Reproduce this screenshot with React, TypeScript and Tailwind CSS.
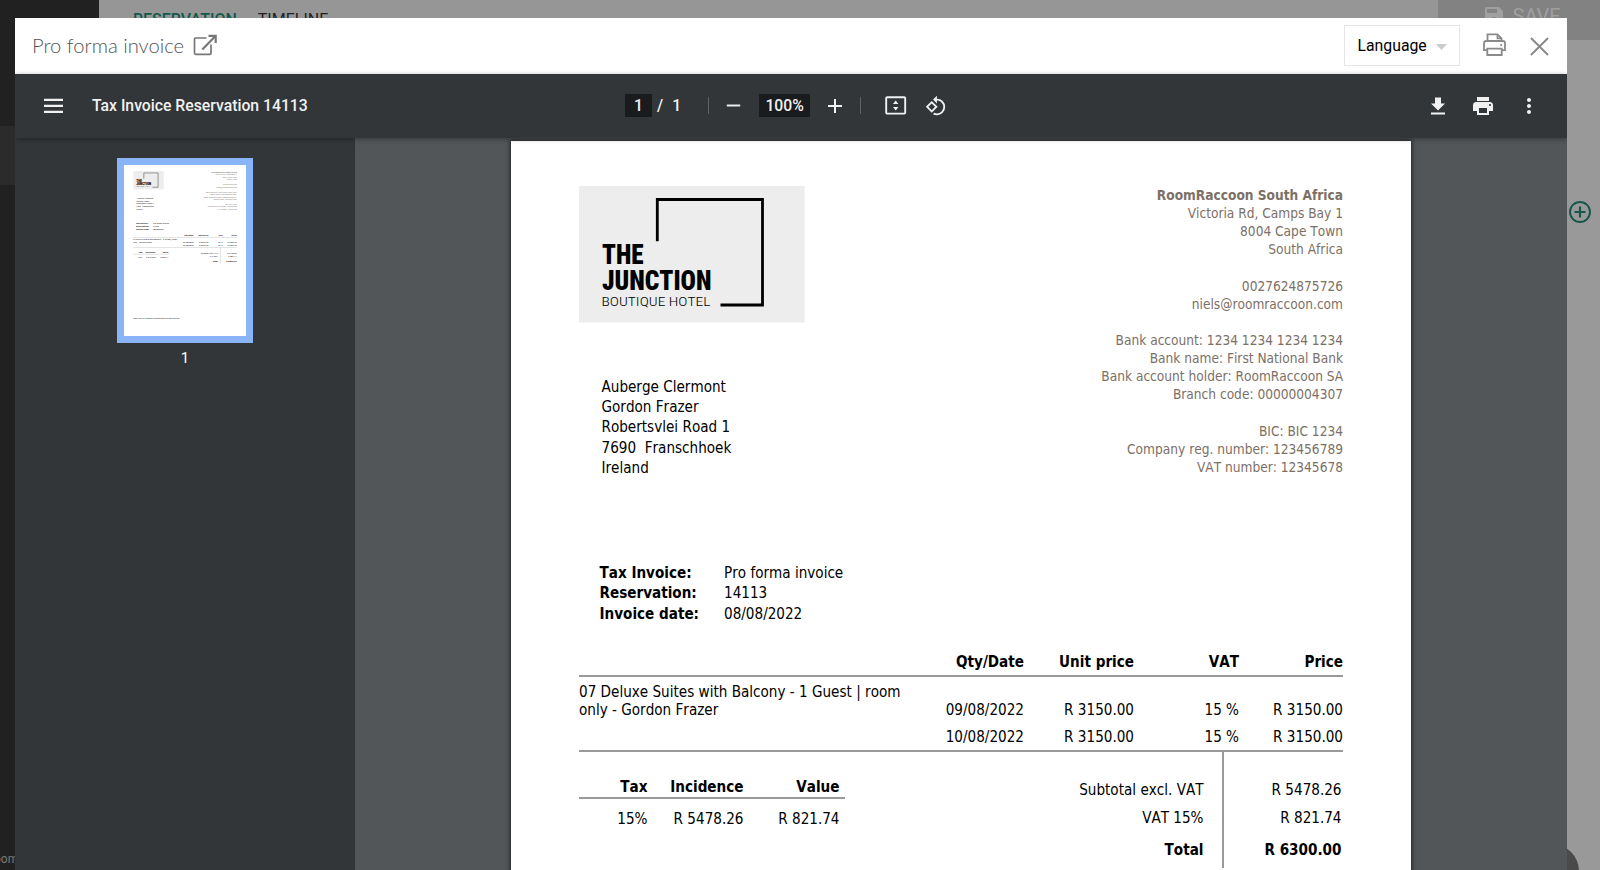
import type { ReactNode } from "react";
import {
  MdAdd,
  MdMenu,
  MdMoreVert,
  MdPrint,
  MdRemove,
  MdRotate90DegreesCcw,
  MdSave,
} from "react-icons/md";

const hotelLines = [
  "Victoria Rd, Camps Bay 1",
  "8004 Cape Town",
  "South Africa",
  "",
  "0027624875726",
  "niels@roomraccoon.com",
  "",
  "Bank account: 1234 1234 1234 1234",
  "Bank name: First National Bank",
  "Bank account holder: RoomRaccoon SA",
  "Branch code: 00000004307",
  "",
  "BIC: BIC 1234",
  "Company reg. number: 123456789",
  "VAT number: 12345678",
];

const guestLines = [
  "Auberge Clermont",
  "Gordon Frazer",
  "Robertsvlei Road 1",
  "7690\u00a0 Franschhoek",
  "Ireland",
];

const meta = [
  ["Tax Invoice:", "Pro forma invoice"],
  ["Reservation:", "14113"],
  ["Invoice date:", "08/08/2022"],
];

function HotelLogo() {
  return (
    <svg width="226" height="137" viewBox="0 0 226 137" className="block">
      <rect width="225.7" height="136.5" fill="#ededed" />
      <path
        d="M78.3 55.3V13.5H183.5V119H141.5"
        fill="none"
        stroke="#000"
        strokeWidth="2.8"
      />
      <g fill="#000" fontFamily="Roboto, sans-serif">
        <text x="23" y="78.3" fontSize="27" fontWeight="900" textLength="41.5" lengthAdjust="spacingAndGlyphs">
          THE
        </text>
        <text x="23" y="104.3" fontSize="27" fontWeight="900" textLength="109.5" lengthAdjust="spacingAndGlyphs">
          JUNCTION
        </text>
        <text x="22.5" y="120.3" fontSize="13.4" fontWeight="300" textLength="109" lengthAdjust="spacingAndGlyphs">
          BOUTIQUE HOTEL
        </text>
      </g>
    </svg>
  );
}

function InvoicePage() {
  return (
    <div className="flex h-[1273px] w-[900px] flex-col bg-white pl-[68px] pr-[68px] pt-[45px] font-['DejaVu_Sans_Condensed','DejaVu_Sans',sans-serif] text-[15.1px] text-black [font-kerning:none] [font-stretch:condensed]">
      <div className="flex h-[376.5px] shrink-0 justify-between">
        <div>
          <HotelLogo />
          <div className="ml-[22.5px] mt-[54px] leading-[20.2px]">
            {guestLines.map((line) => (
              <div key={line}>{line}</div>
            ))}
          </div>
        </div>
        <div className="pt-[0.1px] text-right text-[13.6px] leading-[18.13px] text-[#7c7066]">
          <div className="font-bold">RoomRaccoon South Africa</div>
          {hotelLines.map((line, i) => (
            <div key={i} className="h-[18.13px]">
              {line}
            </div>
          ))}
        </div>
      </div>

      <div className="ml-[20.5px] h-[89.5px] shrink-0 leading-[20.5px]">
        {meta.map(([label, value]) => (
          <div key={label} className="grid grid-cols-[124.5px_1fr]">
            <span className="font-bold">{label}</span>
            <span>{value}</span>
          </div>
        ))}
      </div>

      <div className="grid shrink-0 grid-cols-[345px_100px_110px_105px_104px] border-b-[2.5px] border-[#999] pb-[3px] text-right font-bold leading-[20px]">
        <span />
        <span>Qty/Date</span>
        <span>Unit price</span>
        <span>VAT</span>
        <span>Price</span>
      </div>
      <div className="h-[75px] shrink-0 border-b-[2.5px] border-[#999] pt-[5.5px] leading-[18.2px]">
        <div className="grid grid-cols-[345px_100px_110px_105px_104px] items-end text-right">
          <span className="text-left">
            07 Deluxe Suites with Balcony - 1 Guest | room
            <br />
            only - Gordon Frazer
          </span>
          <span>09/08/2022</span>
          <span>R 3150.00</span>
          <span>15 %</span>
          <span>R 3150.00</span>
        </div>
        <div className="mt-[9px] grid grid-cols-[345px_100px_110px_105px_104px] text-right">
          <span />
          <span>10/08/2022</span>
          <span>R 3150.00</span>
          <span>15 %</span>
          <span>R 3150.00</span>
        </div>
      </div>

      <div className="flex h-[510px] shrink-0 items-start justify-between">
        <div className="w-[266px] pt-[25px] text-right leading-[20px]">
          <div className="grid grid-cols-[68.5px_96px_96px] border-b-[2px] border-[#999] font-bold">
            <span>Tax</span>
            <span>Incidence</span>
            <span>Value</span>
          </div>
          <div className="mt-[9.5px] grid grid-cols-[68.5px_96px_96px]">
            <span>15%</span>
            <span>R 5478.26</span>
            <span>R 821.74</span>
          </div>
        </div>
        <div className="flex h-[116px] text-right leading-[20px]">
          <div className="flex flex-col border-r-2 border-[#999] pr-[18.5px] pt-[28px]">
            <span>Subtotal excl. VAT</span>
            <span className="mt-[8px]">VAT 15%</span>
            <span className="mt-[12px] font-bold">Total</span>
          </div>
          <div className="flex w-[119px] flex-col pr-[1.5px] pt-[28px]">
            <span>R 5478.26</span>
            <span className="mt-[8px]">R 821.74</span>
            <span className="mt-[12px] font-bold">R 6300.00</span>
          </div>
        </div>
      </div>
      <div className="shrink-0 text-[13.6px] leading-[18px]">
        Thank you for choosing RoomRaccoon and safe travels!
      </div>
    </div>
  );
}

function ExternalLinkIcon() {
  return (
    <svg width="25" height="22" viewBox="0 0 25 22" fill="none" stroke="#777" className="block">
      <path d="M13.5 4H2.5Q1.5 4 1.5 5V19Q1.5 20.3 2.5 20.3H17Q18 20.3 18 19.3V10.5" strokeWidth="1.7" />
      <path d="M9.3 15.6L22 2.5" strokeWidth="2.2" />
      <path d="M15.5 1.8H22.7V9" strokeWidth="2.2" />
    </svg>
  );
}

function PrinterOutlineIcon() {
  return (
    <svg width="23" height="23" viewBox="0 0 23 23" fill="none" stroke="#8a8a8a" strokeWidth="1.8" className="block">
      <path d="M4.5 8V1.4H14.5L18.5 5.4V8" />
      <path d="M14.5 1.4V5.4H18.5" />
      <path d="M4 17.2H1V10.2Q1 8 3.2 8H19.8Q22 8 22 10.2V17.2H19" />
      <path d="M4.3 15.6H18.7V22H4.3Z" />
      <path d="M17.3 12H19.1" />
    </svg>
  );
}

function ToolButton({ children }: { children: ReactNode }) {
  return <button className="flex h-8 w-[45.5px] items-center justify-center">{children}</button>;
}

function ModalHeader() {
  return (
    <header className="flex h-[56.5px] shrink-0 items-center bg-white pb-[1px] pl-[17px] pr-[18px]">
      <h1 className="font-['Lato',sans-serif] text-[20.2px] font-light text-[#555]">Pro forma invoice</h1>
      <div className="ml-[8.5px] mt-[-1px]">
        <ExternalLinkIcon />
      </div>
      <button className="ml-auto mt-[1px] flex h-[41px] w-[116px] items-center justify-between border border-[#e6e6e6] pl-[12.5px] pr-[12px] font-['Roboto',sans-serif] text-[15.8px] text-black">
        Language
        <svg width="11" height="6" viewBox="0 0 11 6" className="mt-[2px]">
          <path d="M0 0H11L5.5 6Z" fill="#ccc" />
        </svg>
      </button>
      <div className="ml-[23px] mt-[-1px]">
        <PrinterOutlineIcon />
      </div>
      <svg width="19" height="19" viewBox="0 0 20 20" className="ml-[24px] mt-[2px]" stroke="#8a8a8a" strokeWidth="2.1">
        <path d="M1 1L19 19M19 1L1 19" />
      </svg>
    </header>
  );
}

function PdfToolbar() {
  return (
    <div className="relative z-10 flex h-[64px] shrink-0 items-center bg-[#323639] pb-[1px] font-['Roboto',sans-serif] text-[15.75px] font-medium text-[#f1f1f1] shadow-[0_1px_5px_rgba(0,0,0,0.35)]">
      <div className="flex w-[610px] items-center pl-[26px]">
        <svg width="25" height="20" viewBox="0 0 25 20" fill="#f1f1f1">
          <path d="M3 2.8H22V5.1H3ZM3 8.8H22V11.1H3ZM3 14.8H22V17.1H3Z" />
        </svg>
        <span className="ml-[26px]">Tax Invoice Reservation 14113</span>
      </div>
      <div className="flex items-center">
        <span className="flex h-[23px] w-[27px] items-center justify-center bg-[#191b1c]">1</span>
        <span className="ml-[5px]">/</span>
        <span className="ml-[9px]">1</span>
        <span className="ml-[27px] h-[17px] w-px bg-[#5f6366]" />
        <MdRemove size={23} className="ml-[13px]" />
        <span className="ml-[14px] flex h-[23px] w-[51px] items-center justify-center bg-[#191b1c]">100%</span>
        <MdAdd size={24} className="ml-[13px]" />
        <span className="ml-[13px] h-[17px] w-px bg-[#5f6366]" />
        <svg width="22" height="19" viewBox="0 0 22 19" className="ml-[24px]" fill="#f1f1f1">
          <rect x="1.2" y="1.2" width="19" height="16.4" rx="1" fill="none" stroke="#f1f1f1" strokeWidth="1.9" />
          <path d="M8 8L10.7 4.4L13.4 8ZM8 11H13.4L10.7 14.6Z" />
        </svg>
        <MdRotate90DegreesCcw size={22} className="ml-[18px]" />
      </div>
      <div className="ml-auto flex pr-[15.5px]">
        <ToolButton>
          <svg width="16" height="18" viewBox="0 0 16 18" fill="#f1f1f1">
            <path d="M5 0.5H11V6.5H15L8 13.5L1 6.5H5ZM1 15.4H15V17.4H1Z" />
          </svg>
        </ToolButton>
        <ToolButton>
          <MdPrint size={24} />
        </ToolButton>
        <ToolButton>
          <MdMoreVert size={24} />
        </ToolButton>
      </div>
    </div>
  );
}

function Backdrop() {
  return (
    <div className="flex h-full bg-[#999] font-['Roboto',sans-serif]">
      <div className="flex w-[99px] flex-col bg-[#212121]">
        <div className="mt-[126px] h-[59px] bg-[#2b2b2b]" />
        <div className="ml-[-6px] mt-auto pb-[2px] text-[12px] text-[#777]">oom</div>
      </div>
      <div className="flex h-[40px] grow bg-[#969696] pl-[34px] text-[16px] font-medium">
        <span className="mt-[8px] text-[#12594c]">RESERVATION</span>
        <span className="ml-[21px] mt-[8px] font-normal text-[#222]">TIMELINE</span>
        <div className="ml-auto flex w-[162px] bg-[#828282] pl-[43.5px] font-normal text-[#a0a0a0]">
          <MdSave size={24} className="mt-[4px]" />
          <span className="ml-[7px] mt-px text-[20px]">SAVE</span>
        </div>
      </div>
    </div>
  );
}

export default function App() {
  return (
    <div className="relative h-[870px] w-[1600px] overflow-hidden">
      <Backdrop />
      <svg width="22" height="22" viewBox="0 0 22 22" className="absolute left-[1568.5px] top-[200.5px]" fill="none" stroke="#17574b">
        <circle cx="11" cy="11" r="10" strokeWidth="1.9" />
        <path d="M11 5.5V16.5M5.5 11H16.5" strokeWidth="2.2" />
      </svg>
      <div className="absolute left-[1525px] top-[844px] h-[54px] w-[54px] rounded-full bg-[#4a4a4a]" />

      <div className="absolute left-[15px] top-[17.5px] flex h-[853px] w-[1552px] flex-col overflow-hidden">
        <ModalHeader />
        <PdfToolbar />
        <div className="flex min-h-0 grow">
          <aside className="flex w-[340px] shrink-0 flex-col items-center bg-[#323639] pt-[20px]">
            <div className="ml-[-1px] h-[185px] w-[136px] bg-[#8ab4f8] p-[7px]">
              <div aria-hidden="true" className="h-[171px] w-[122px] overflow-hidden">
                <div className="h-[1273px] w-[900px] origin-top-left scale-[0.1356]">
                  <InvoicePage />
                </div>
              </div>
            </div>
            <span className="mt-[4px] font-['Roboto',sans-serif] text-[15px] leading-[22px] text-white">1</span>
          </aside>
          <main className="min-w-0 grow overflow-hidden bg-[#525659] pl-[156px] pt-[3px]">
            <div className="w-[900px] shadow-[0_0_4px_1px_rgba(0,0,0,0.6)]">
              <InvoicePage />
            </div>
          </main>
        </div>
      </div>
    </div>
  );
}
